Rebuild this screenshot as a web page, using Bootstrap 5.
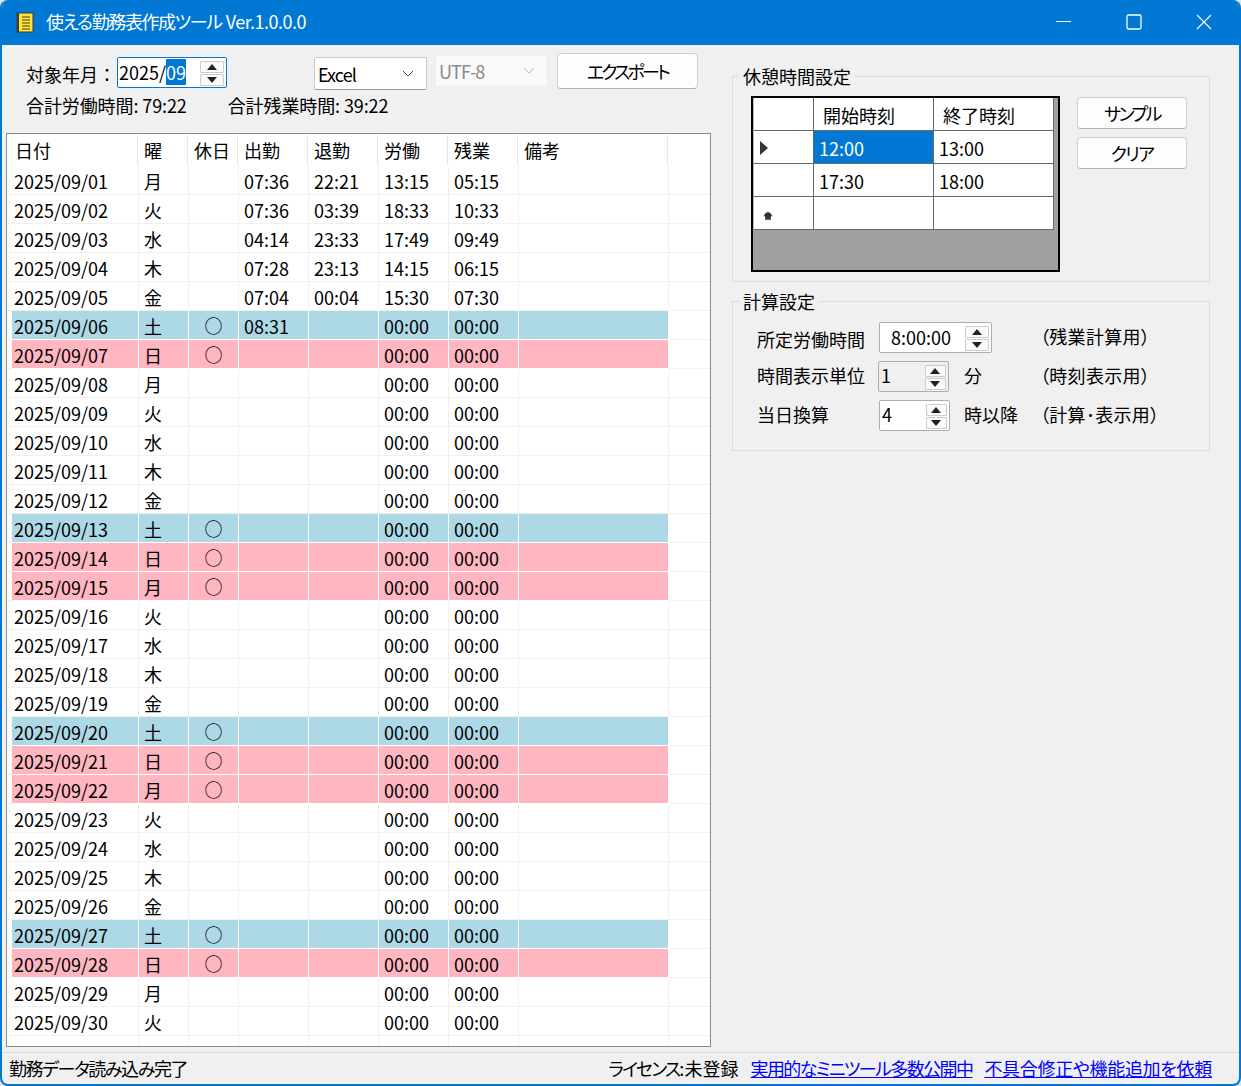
<!DOCTYPE html>
<html lang="ja"><head><meta charset="utf-8"><title>使える勤務表作成ツール</title>
<link href="https://cdn.jsdelivr.net/npm/bootstrap@5.3.0/dist/css/bootstrap.min.css" rel="stylesheet">
<style>
html,body{margin:0;height:100%;background:#dfe3e8;overflow:hidden}
body{font-family:"Noto Sans CJK JP","Noto Sans",sans-serif;font-size:18px;line-height:28px;color:#000;font-feature-settings:"palt"}
button,select{font-feature-settings:"palt"}
.appwin{width:1241px;height:1086px;background:#f0f0f0;border:2px solid #0078d4;border-top:0;border-radius:8px;overflow:hidden}
.ttl{height:45px;background:#0078d4;color:#fff;margin:0 -2px;padding:0 2px 0 16px}
.ttl-text{margin:-3px 0 0 12px;letter-spacing:-1.4px}
.ttl-ver{letter-spacing:-.5px;margin-left:4px}
.wbtn{width:70px;height:45px}
.wbtn svg{margin-top:-1px}
.mainarea{height:1007px}
.leftpane{width:709px}
.tb{height:45px;padding-left:24px}
.tb-label{width:91px;margin-top:15px;font-feature-settings:normal}
.spin{background:#fff;border:1px solid #adadad;border-radius:2px;height:31px}
.spin-date{width:110px;margin-top:12px;border-color:#0078d4;padding-left:1px}
.sel{background:#0078d4;color:#fff}
.arrows{width:24px;gap:1px}
.arr{height:12px;background:#fafafa;border:1px solid #ccc;border-radius:1px}
.arr svg{display:block}
.combo.form-select{width:113px;height:33px;margin-top:12px;margin-left:87px;padding:2px 0 0 3px;font-size:18px;line-height:29px;letter-spacing:-.9px;color:#000;border-radius:2px;border-color:#c8c8c8;border-bottom-color:#999;background-position:right 10px center;background-size:16px 12px;
background-image:url("data:image/svg+xml,%3csvg xmlns='http://www.w3.org/2000/svg' viewBox='0 0 16 12'%3e%3cpath fill='none' stroke='%23555' d='M3 3l5 5 5-5'/%3e%3c/svg%3e")}
.combo2.form-select{margin-top:10px;margin-left:8px;height:32px;padding-top:0;background-color:#f9f9f9;color:#8a8a8a;border-color:#ececec;line-height:30px;
background-image:url("data:image/svg+xml,%3csvg xmlns='http://www.w3.org/2000/svg' viewBox='0 0 16 12'%3e%3cpath fill='none' stroke='%23bbb' d='M3 3l5 5 5-5'/%3e%3c/svg%3e")}
.wbutton.btn{background:#fdfdfd;border:1px solid #d0d0d0;border-bottom-color:#b0b0b0;border-radius:4px;font-size:18px;color:#000;padding:0;line-height:28px}
.btn-exp.btn{width:141px;height:36px;margin-top:8px;margin-left:9px;letter-spacing:-2.8px}
.totals{height:43px;padding:2px 0 0 24px;gap:41px;margin-top:-1px;letter-spacing:-.1px}
.gridframe{width:705px;height:914px;margin:1px 0 0 4px;background:#fff;border:1px solid #8a8a90}
.kintai{table-layout:fixed;width:703px;border-collapse:separate;border-spacing:0;margin:0}
.kintai>thead>tr>th{height:32px;font-weight:400;padding:2px 0 0 5px;vertical-align:top;background:#fff;border:0;position:relative;color:#000}
.kintai>thead>tr>th.gut{padding:0}
.kintai th:not(.gut):not(.fil)::after{content:"";position:absolute;right:1px;top:1px;bottom:1px;width:1px;background:#e6e6e6}
.kintai>thead>tr>th.dh{padding-left:3px}
.kintai>tbody>tr>td{height:29px;padding:2px 0 0 5px;line-height:26px;background:#fff;color:#000;border:0;border-bottom:1px solid #f0f0f0;border-right:1px solid #f0f0f0;white-space:nowrap;box-shadow:none}
.kintai>tbody>tr>td.gut{padding:0;border-right:0}
.kintai>tbody>tr>td.dt{padding-left:2px}
.kintai>tbody>tr>td.ho{padding:1px 0 0;text-align:center}
.kintai>tbody>tr>td.fil{border-right:0}
.kintai>tbody>tr.sat>td:not(.gut):not(.fil){background:#add8e6;border-color:#fff}
.kintai>tbody>tr.hol>td:not(.gut):not(.fil){background:#ffb6c1;border-color:#fff}
.kintai>tbody>tr.end>td{height:10px;padding:0;border-bottom:0}
.rightpane{width:478px;margin-left:21px}
.grp1,.grp2{border:1px solid #dcdcdc}
.grp1 legend,.grp2 legend{float:none;width:auto;padding:0 4px;font-size:18px;line-height:24px}
.grp1 legend{margin:0 0 0 -12px}
.grp2 legend{margin:0 0 0 -18px}
.grp1{height:218px;margin-top:19px;padding:8px 0 0 18px}
.grp2{height:162px;margin-top:7px;padding:9px 0 0 24px}
.breakgrid{width:309px;height:176px;background:#a0a0a0;border:2px solid #000}
.breaktbl{width:301px;table-layout:fixed;border-collapse:separate;border-spacing:0}
.breaktbl td{height:33px;background:#fff;padding:2px 0 0 5px;border-right:1px solid #696969;border-bottom:1px solid #696969;line-height:26px}
.breaktbl td.hd{padding:1px 0 0 9px}
.breaktbl td.rh{padding:1px 0 0 5px;border-left:1px solid #bbb}
.breaktbl td.cur{background:#0078d4;color:#fff}
.newmark{margin:4px 0 0 4px}
.sidebtns{margin:1px 0 0 17px;gap:8px;width:110px}
.sidebtns .btn{height:32px}
.btn-sam.btn{letter-spacing:-2.5px}
.btn-clr.btn{letter-spacing:-1.7px}
.calc{display:grid;grid-template-columns:122px 85px 76px auto;grid-auto-rows:31px;row-gap:8px;line-height:29px}
.calc .lb1{padding-top:3px}
.notecell{letter-spacing:.3px}
.sp1{width:113px;padding-left:11px}
.sp2{width:71px;padding-left:2px;margin-left:-1px}
.sp2off{background:#f0f0f0}
.sp3{width:71px;padding-left:2px}
.sp1{line-height:29px}
.sp2,.sp3{line-height:27px}
.spin .arrows{margin:3px 2px 0 0}
.sp2 .arrows,.sp3 .arrows{width:21px}
.sp2 .arr svg,.sp3 .arr svg{margin-left:-2px}
.statusbar{height:32px;border-top:1px solid #d8d8d8;padding:1px 27px 0 7px}
.statusbar a{color:#00f}
.nar14{letter-spacing:-1.4px}
.nar16{letter-spacing:-1.6px}
.nar19{letter-spacing:-1.9px}
.nar3{letter-spacing:-.3px}
</style></head>
<body>
<div class="appwin d-flex flex-column">
 <div class="ttl d-flex align-items-center">
  <svg width="18" height="21" viewBox="0 0 18 21"><rect x="0.5" y="0.5" width="17" height="20" fill="#3c3c3c"/><rect x="3" y="1.5" width="13.5" height="18" fill="#ffe23c"/><path d="M6 5h8M6 8h8M6 11h8M6 14h8M6 17h8" stroke="#4a4020" stroke-width="1"/></svg>
  <span class="ttl-text flex-grow-1">使える勤務表作成ツール<span class="ttl-ver">Ver.1.0.0.0</span></span>
  <div class="wbtn d-flex align-items-center justify-content-center"><svg width="16" height="16" viewBox="0 0 16 16"><path d="M0 7.500h15" stroke="#fff"/></svg></div>
  <div class="wbtn d-flex align-items-center justify-content-center"><svg width="16" height="16" viewBox="0 0 16 16"><rect x="1" y="1" width="14" height="14" rx="1.5" fill="none" stroke="#fff" stroke-width="1.3"/></svg></div>
  <div class="wbtn d-flex align-items-center justify-content-center"><svg width="16" height="16" viewBox="0 0 16 16"><path d="M1 1l14 14M15 1L1 15" stroke="#fff" stroke-width="1.1"/></svg></div>
 </div>
 <div class="mainarea d-flex">
  <div class="leftpane">
   <div class="tb d-flex align-items-start">
    <div class="tb-label">対象年月：</div>
    <div class="spin spin-date d-flex justify-content-between"><div>2025/<span class="sel">09</span></div>
     <div class="arrows d-flex flex-column"><div class="arr"><svg width="22" height="10" viewBox="0 0 22 10"><path d="M6 8l5-6 5 6z" fill="#222"/></svg></div><div class="arr"><svg width="22" height="10" viewBox="0 0 22 10"><path d="M6 2l5 6 5-6z" fill="#222"/></svg></div></div></div>
    <select class="form-select combo"><option>Excel</option></select>
    <select class="form-select combo combo2" disabled><option>UTF-8</option></select>
    <button class="btn wbutton btn-exp" type="button">エクスポート</button>
   </div>
   <div class="totals d-flex"><span>合計労働時間: 79:22</span><span>合計残業時間: 39:22</span></div>
   <div class="gridframe overflow-hidden">
    <table class="table kintai">
     <colgroup><col style="width:5px"><col style="width:127px"><col style="width:50px"><col style="width:50px"><col style="width:70px"><col style="width:70px"><col style="width:70px"><col style="width:70px"><col style="width:150px"><col style="width:41px"></colgroup>
     <thead><tr><th class="gut"></th><th class="dh">日付</th><th>曜</th><th>休日</th><th>出勤</th><th>退勤</th><th>労働</th><th>残業</th><th>備考</th><th class="fil"></th></tr></thead>
     <tbody>
<tr><td class="gut"></td><td class="dt">2025/09/01</td><td>月</td><td class="ho"></td><td>07:36</td><td>22:21</td><td>13:15</td><td>05:15</td><td></td><td class="fil"></td></tr>
<tr><td class="gut"></td><td class="dt">2025/09/02</td><td>火</td><td class="ho"></td><td>07:36</td><td>03:39</td><td>18:33</td><td>10:33</td><td></td><td class="fil"></td></tr>
<tr><td class="gut"></td><td class="dt">2025/09/03</td><td>水</td><td class="ho"></td><td>04:14</td><td>23:33</td><td>17:49</td><td>09:49</td><td></td><td class="fil"></td></tr>
<tr><td class="gut"></td><td class="dt">2025/09/04</td><td>木</td><td class="ho"></td><td>07:28</td><td>23:13</td><td>14:15</td><td>06:15</td><td></td><td class="fil"></td></tr>
<tr><td class="gut"></td><td class="dt">2025/09/05</td><td>金</td><td class="ho"></td><td>07:04</td><td>00:04</td><td>15:30</td><td>07:30</td><td></td><td class="fil"></td></tr>
<tr class="sat"><td class="gut"></td><td class="dt">2025/09/06</td><td>土</td><td class="ho">○</td><td>08:31</td><td></td><td>00:00</td><td>00:00</td><td></td><td class="fil"></td></tr>
<tr class="hol"><td class="gut"></td><td class="dt">2025/09/07</td><td>日</td><td class="ho">○</td><td></td><td></td><td>00:00</td><td>00:00</td><td></td><td class="fil"></td></tr>
<tr><td class="gut"></td><td class="dt">2025/09/08</td><td>月</td><td class="ho"></td><td></td><td></td><td>00:00</td><td>00:00</td><td></td><td class="fil"></td></tr>
<tr><td class="gut"></td><td class="dt">2025/09/09</td><td>火</td><td class="ho"></td><td></td><td></td><td>00:00</td><td>00:00</td><td></td><td class="fil"></td></tr>
<tr><td class="gut"></td><td class="dt">2025/09/10</td><td>水</td><td class="ho"></td><td></td><td></td><td>00:00</td><td>00:00</td><td></td><td class="fil"></td></tr>
<tr><td class="gut"></td><td class="dt">2025/09/11</td><td>木</td><td class="ho"></td><td></td><td></td><td>00:00</td><td>00:00</td><td></td><td class="fil"></td></tr>
<tr><td class="gut"></td><td class="dt">2025/09/12</td><td>金</td><td class="ho"></td><td></td><td></td><td>00:00</td><td>00:00</td><td></td><td class="fil"></td></tr>
<tr class="sat"><td class="gut"></td><td class="dt">2025/09/13</td><td>土</td><td class="ho">○</td><td></td><td></td><td>00:00</td><td>00:00</td><td></td><td class="fil"></td></tr>
<tr class="hol"><td class="gut"></td><td class="dt">2025/09/14</td><td>日</td><td class="ho">○</td><td></td><td></td><td>00:00</td><td>00:00</td><td></td><td class="fil"></td></tr>
<tr class="hol"><td class="gut"></td><td class="dt">2025/09/15</td><td>月</td><td class="ho">○</td><td></td><td></td><td>00:00</td><td>00:00</td><td></td><td class="fil"></td></tr>
<tr><td class="gut"></td><td class="dt">2025/09/16</td><td>火</td><td class="ho"></td><td></td><td></td><td>00:00</td><td>00:00</td><td></td><td class="fil"></td></tr>
<tr><td class="gut"></td><td class="dt">2025/09/17</td><td>水</td><td class="ho"></td><td></td><td></td><td>00:00</td><td>00:00</td><td></td><td class="fil"></td></tr>
<tr><td class="gut"></td><td class="dt">2025/09/18</td><td>木</td><td class="ho"></td><td></td><td></td><td>00:00</td><td>00:00</td><td></td><td class="fil"></td></tr>
<tr><td class="gut"></td><td class="dt">2025/09/19</td><td>金</td><td class="ho"></td><td></td><td></td><td>00:00</td><td>00:00</td><td></td><td class="fil"></td></tr>
<tr class="sat"><td class="gut"></td><td class="dt">2025/09/20</td><td>土</td><td class="ho">○</td><td></td><td></td><td>00:00</td><td>00:00</td><td></td><td class="fil"></td></tr>
<tr class="hol"><td class="gut"></td><td class="dt">2025/09/21</td><td>日</td><td class="ho">○</td><td></td><td></td><td>00:00</td><td>00:00</td><td></td><td class="fil"></td></tr>
<tr class="hol"><td class="gut"></td><td class="dt">2025/09/22</td><td>月</td><td class="ho">○</td><td></td><td></td><td>00:00</td><td>00:00</td><td></td><td class="fil"></td></tr>
<tr><td class="gut"></td><td class="dt">2025/09/23</td><td>火</td><td class="ho"></td><td></td><td></td><td>00:00</td><td>00:00</td><td></td><td class="fil"></td></tr>
<tr><td class="gut"></td><td class="dt">2025/09/24</td><td>水</td><td class="ho"></td><td></td><td></td><td>00:00</td><td>00:00</td><td></td><td class="fil"></td></tr>
<tr><td class="gut"></td><td class="dt">2025/09/25</td><td>木</td><td class="ho"></td><td></td><td></td><td>00:00</td><td>00:00</td><td></td><td class="fil"></td></tr>
<tr><td class="gut"></td><td class="dt">2025/09/26</td><td>金</td><td class="ho"></td><td></td><td></td><td>00:00</td><td>00:00</td><td></td><td class="fil"></td></tr>
<tr class="sat"><td class="gut"></td><td class="dt">2025/09/27</td><td>土</td><td class="ho">○</td><td></td><td></td><td>00:00</td><td>00:00</td><td></td><td class="fil"></td></tr>
<tr class="hol"><td class="gut"></td><td class="dt">2025/09/28</td><td>日</td><td class="ho">○</td><td></td><td></td><td>00:00</td><td>00:00</td><td></td><td class="fil"></td></tr>
<tr><td class="gut"></td><td class="dt">2025/09/29</td><td>月</td><td class="ho"></td><td></td><td></td><td>00:00</td><td>00:00</td><td></td><td class="fil"></td></tr>
<tr><td class="gut"></td><td class="dt">2025/09/30</td><td>火</td><td class="ho"></td><td></td><td></td><td>00:00</td><td>00:00</td><td></td><td class="fil"></td></tr>
<tr class="end"><td class="gut"></td><td></td><td></td><td></td><td></td><td></td><td></td><td></td><td></td><td class="fil"></td></tr>
     </tbody>
    </table>
   </div>
  </div>
  <div class="rightpane">
   <fieldset class="grp1">
    <legend>休憩時間設定</legend>
    <div class="d-flex align-items-start">
     <div class="breakgrid">
      <table class="breaktbl">
       <colgroup><col style="width:61px"><col style="width:120px"><col style="width:120px"></colgroup>
       <tr><td class="rh"></td><td class="hd">開始時刻</td><td class="hd">終了時刻</td></tr>
       <tr><td class="rh"><svg class="d-block" width="10" height="14" viewBox="0 0 10 14"><path d="M1 0l8 7-8 7z" fill="#333"/></svg></td><td class="cur">12:00</td><td>13:00</td></tr>
       <tr><td class="rh"></td><td>17:30</td><td>18:00</td></tr>
       <tr><td class="rh"><svg class="d-block newmark" width="10" height="10" viewBox="0 0 10 10"><path d="M5 .8l2.800 1.700 1.400 2.200-1.500 1.300L8 8.800H2l.3-2.800L.8 4.700l1.400-2.200z" fill="#333"/></svg></td><td></td><td></td></tr>
      </table>
     </div>
     <div class="sidebtns d-flex flex-column">
      <button class="btn wbutton btn-sam" type="button">サンプル</button>
      <button class="btn wbutton btn-clr" type="button">クリア</button>
     </div>
    </div>
   </fieldset>
   <fieldset class="grp2">
    <legend>計算設定</legend>
    <div class="calc">
     <div class="lb1">所定労働時間</div>
     <div class="spin sp1 d-flex justify-content-between"><div>8:00:00</div><div class="arrows d-flex flex-column"><div class="arr"><svg width="22" height="10" viewBox="0 0 22 10"><path d="M6 8l5-6 5 6z" fill="#222"/></svg></div><div class="arr"><svg width="22" height="10" viewBox="0 0 22 10"><path d="M6 2l5 6 5-6z" fill="#222"/></svg></div></div></div>
     <div></div>
     <div class="notecell">（残業計算用）</div>
     <div>時間表示単位</div>
     <div class="spin sp2 sp2off d-flex justify-content-between"><div>1</div><div class="arrows d-flex flex-column"><div class="arr"><svg width="22" height="10" viewBox="0 0 22 10"><path d="M6 8l5-6 5 6z" fill="#222"/></svg></div><div class="arr"><svg width="22" height="10" viewBox="0 0 22 10"><path d="M6 2l5 6 5-6z" fill="#222"/></svg></div></div></div>
     <div>分</div>
     <div class="notecell">（時刻表示用）</div>
     <div>当日換算</div>
     <div class="spin sp3 d-flex justify-content-between"><div>4</div><div class="arrows d-flex flex-column"><div class="arr"><svg width="22" height="10" viewBox="0 0 22 10"><path d="M6 8l5-6 5 6z" fill="#222"/></svg></div><div class="arr"><svg width="22" height="10" viewBox="0 0 22 10"><path d="M6 2l5 6 5-6z" fill="#222"/></svg></div></div></div>
     <div>時以降</div>
     <div class="notecell">（計算･表示用）</div>
    </div>
   </fieldset>
  </div>
 </div>
 <div class="statusbar d-flex justify-content-between">
  <div class="nar14">勤務データ読み込み完了</div>
  <div class="d-flex gap-2"><span class="me-1"><span class="nar19">ライセンス: </span>未登録</span><a href="#" class="me-1 nar16">実用的なミニツール多数公開中</a><a href="#" class="nar3">不具合修正や機能追加を依頼</a></div>
 </div>
</div>
<script src="https://cdn.jsdelivr.net/npm/bootstrap@5.3.0/dist/js/bootstrap.bundle.min.js"></script>
</body></html>
